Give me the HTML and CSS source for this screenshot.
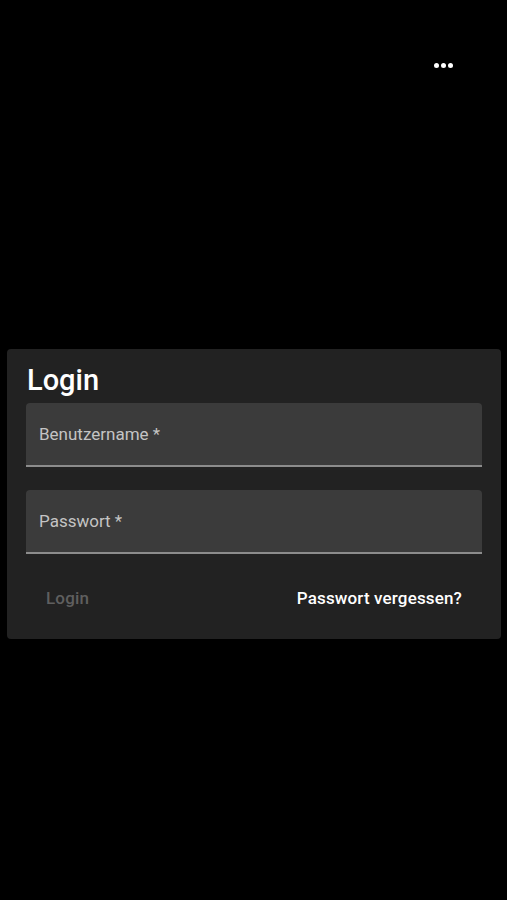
FILE: index.html
```html
<!DOCTYPE html>
<html lang="de">
<head>
<meta charset="utf-8">
<title>Login</title>
<link rel="stylesheet" href="styles.css">
</head>
<body>
<header class="topbar">
  <button class="more" aria-label="Mehr">
    <span class="dot"></span><span class="dot"></span><span class="dot"></span>
  </button>
</header>
<main class="content">
  <section class="card">
    <h1 class="title">Login</h1>
    <div class="field"><span class="label">Benutzername *</span></div>
    <div class="field"><span class="label">Passwort *</span></div>
    <div class="actions">
      <button class="btn btn-disabled">Login</button>
      <button class="btn btn-link">Passwort vergessen?</button>
    </div>
  </section>
</main>
</body>
</html>
```
FILE: styles.css
```css
* { box-sizing: border-box; }
html, body {
  margin: 0;
  padding: 0;
  background: #000;
  height: 900px;
  font-family: Roboto, "Noto Sans", sans-serif;
  color: #fff;
}
.topbar {
  height: 130px;
  display: flex;
  justify-content: flex-end;
  align-items: center;
  padding-right: 54px;
}
.more {
  background: none;
  border: 0;
  padding: 0;
  display: flex;
  gap: 2px;
  cursor: pointer;
}
.dot {
  width: 5px;
  height: 5px;
  border-radius: 50%;
  background: #fff;
}
.content {
  padding-top: 219px;
}
.card {
  margin: 0 6px 0 7px;
  background: #222222;
  border-radius: 4px;
  padding: 14px 19px 19px 19px;
}
.title {
  margin: 0 0 6px 1px;
  font-size: 29px;
  font-weight: 500;
  line-height: 34px;
}
.field {
  height: 64px;
  background: #3b3b3b;
  border-radius: 4px 4px 0 0;
  border-bottom: 2px solid #8c8c8c;
  display: flex;
  align-items: center;
  padding-left: 13px;
}
.field + .field {
  margin-top: 23px;
}
.label {
  font-size: 17px;
  color: #c4c4c4;
}
.actions {
  margin-top: 22px;
  height: 44px;
  display: flex;
  justify-content: space-between;
  align-items: center;
}
.btn {
  background: none;
  border: 0;
  font-family: Roboto, "Noto Sans", sans-serif;
  font-size: 17px;
  font-weight: 500;
  letter-spacing: 0.15px;
  padding: 8px 20px;
}
.btn-disabled { color: #5f5f5f; }
.btn-link { color: #fff; }
```
